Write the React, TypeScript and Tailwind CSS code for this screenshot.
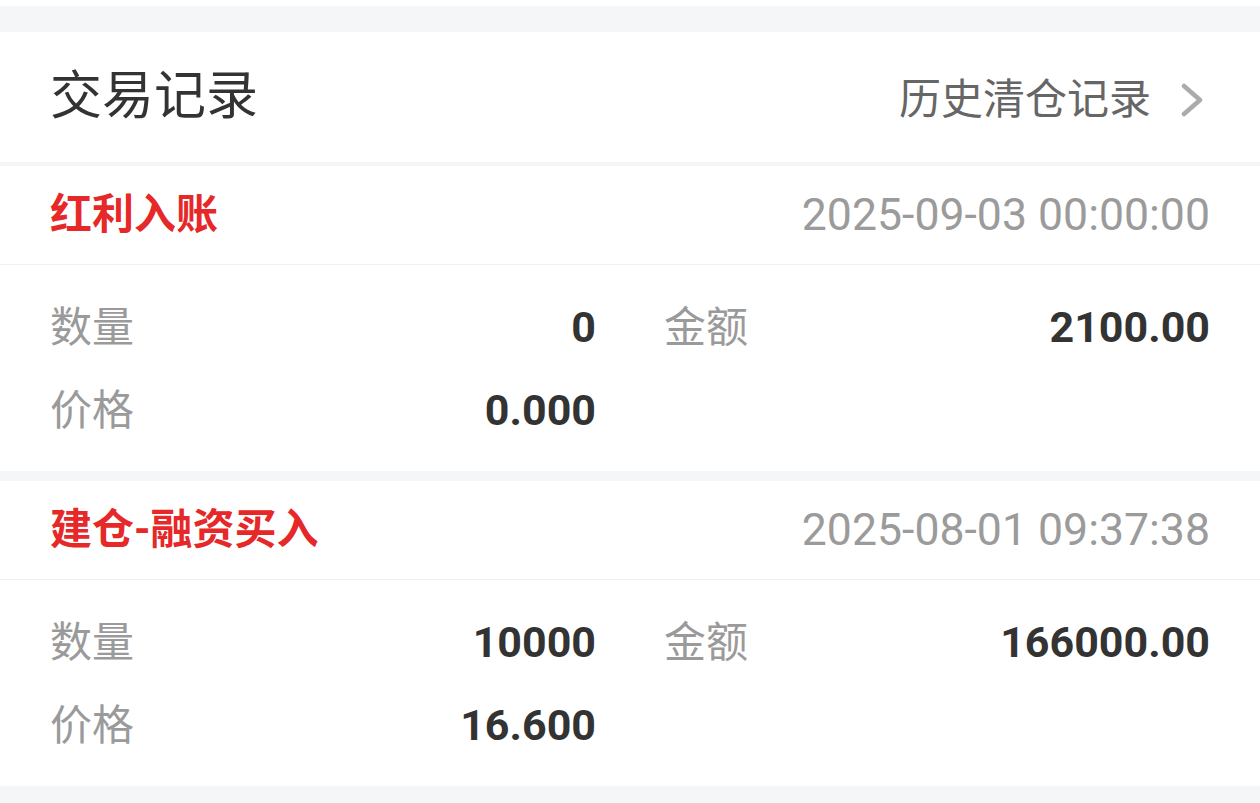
import React from "react";

const FONT = "font-['Roboto','Noto_Sans_CJK_SC',sans-serif]";

type Rec = {
  title: string;
  time: string;
  qty: string;
  amount: string;
  price: string;
};

const records: Rec[] = [
  { title: "红利入账", time: "2025-09-03 00:00:00", qty: "0", amount: "2100.00", price: "0.000" },
  { title: "建仓-融资买入", time: "2025-08-01 09:37:38", qty: "10000", amount: "166000.00", price: "16.600" },
];

function Cell({ label, value }: { label: string; value?: string }) {
  return (
    <div className="flex h-[83px] items-center justify-between">
      <span className="text-[42px] leading-none text-[#9a9a9a]">{label}</span>
      {value !== undefined && (
        <span className="text-[43px] font-bold leading-none text-[#333333]">{value}</span>
      )}
    </div>
  );
}

function RecordCard({ r }: { r: Rec }) {
  return (
    <div className="bg-white">
      <div className="flex h-[99px] items-center justify-between border-b border-[#f0f0f0] px-[50px]">
        <span className="text-[42px] font-bold leading-none text-[#e62828]">{r.title}</span>
        <span className="text-[44.6px] leading-none text-[#9b9b9b]">{r.time}</span>
      </div>
      <div className="grid grid-cols-2 gap-x-[68px] px-[50px] pt-[21px] pb-[19px]">
        <Cell label="数量" value={r.qty} />
        <Cell label="金额" value={r.amount} />
        <Cell label="价格" value={r.price} />
        <div />
      </div>
    </div>
  );
}

export default function App() {
  return (
    <div className={`${FONT} flex h-[803px] w-full flex-col overflow-hidden bg-[#f5f6f8]`}>
      <div className="h-[6px] bg-white" />
      <div className="h-[26px]" />
      <div className="flex h-[130px] items-center justify-between bg-white pl-[50px] pr-[57px]">
        <span className="text-[52px] leading-none text-[#333333]">交易记录</span>
        <div className="mt-[5px] flex items-center">
          <span className="text-[42px] leading-none text-[#666666]">历史清仓记录</span>
          <svg className="ml-[30px]" width="22" height="34" viewBox="0 0 22 34" fill="none">
            <polyline
              points="3,3 19,17 3,31"
              stroke="#ababab"
              strokeWidth="4.5"
              strokeLinecap="round"
              strokeLinejoin="round"
            />
          </svg>
        </div>
      </div>
      <div className="flex flex-col gap-[10px] pt-[4px]">
        {records.map((r) => (
          <RecordCard key={r.time} r={r} />
        ))}
      </div>
    </div>
  );
}
